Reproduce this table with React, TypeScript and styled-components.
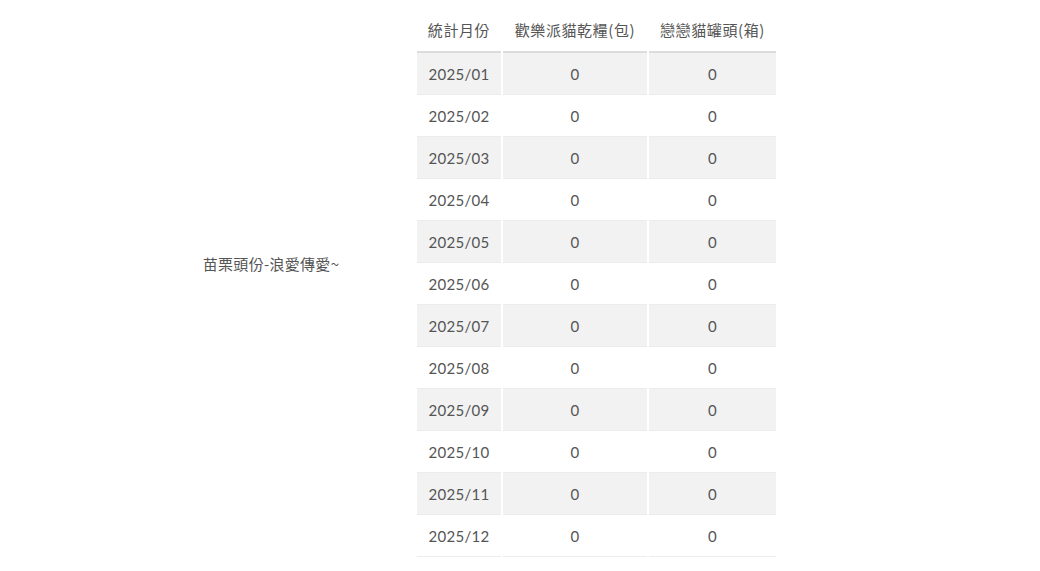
import React from "react";
import styled, { createGlobalStyle } from "styled-components";

const Global = createGlobalStyle`
  html, body { margin: 0; padding: 0; background: #fff; }
  body { font-family: "Open Sans", "Noto Sans CJK TC", sans-serif; color: #555; }
`;

const Layout = styled.div`
  display: flex;
  align-items: flex-start;
  padding-left: 125px;
`;

const LabelCell = styled.div`
  width: 292px;
  height: 527px;
  display: flex;
  align-items: center;
  justify-content: center;
  font-size: 15px;
  letter-spacing: 0.3px;
  color: #555;
  font-family: "Noto Sans CJK TC", sans-serif;
`;

const Table = styled.table`
  border-collapse: separate;
  border-spacing: 2px 0;
  margin-left: -2px;
  font-size: 14px;
`;

const Th = styled.th<{ $w: number }>`
  width: ${(p) => p.$w}px;
  box-sizing: border-box;
  height: 53px;
  padding: 0 0 11px;
  vertical-align: bottom;
  font-weight: normal;
  font-size: 15px;
  letter-spacing: 0.6px;
  color: #555;
  border-bottom: 2px solid #dcdcdc;
  font-family: "Noto Sans CJK TC", sans-serif;
  white-space: nowrap;
`;

const Td = styled.td<{ $odd: boolean }>`
  height: 42px;
  box-sizing: border-box;
  padding: 0;
  text-align: center;
  vertical-align: middle;
  background: ${(p) => (p.$odd ? "#f2f2f2" : "#fff")};
  border-bottom: 1px solid #ececec;
  color: #555;
  font-family: "Lato", "Open Sans", sans-serif;
  font-size: 15px;
  letter-spacing: 0.3px;
`;

const months = Array.from({ length: 12 }, (_, i) => `2025/${String(i + 1).padStart(2, "0")}`);

export default function App() {
  return (
    <>
      <Global />
      <Layout>
        <LabelCell>苗栗頭份-浪愛傳愛~</LabelCell>
        <Table>
          <thead>
            <tr>
              <Th $w={84}>統計月份</Th>
              <Th $w={144}>歡樂派貓乾糧(包)</Th>
              <Th $w={127}>戀戀貓罐頭(箱)</Th>
            </tr>
          </thead>
          <tbody>
            {months.map((m, i) => (
              <tr key={m}>
                <Td $odd={i % 2 === 0}>{m}</Td>
                <Td $odd={i % 2 === 0}>0</Td>
                <Td $odd={i % 2 === 0}>0</Td>
              </tr>
            ))}
          </tbody>
        </Table>
      </Layout>
    </>
  );
}
